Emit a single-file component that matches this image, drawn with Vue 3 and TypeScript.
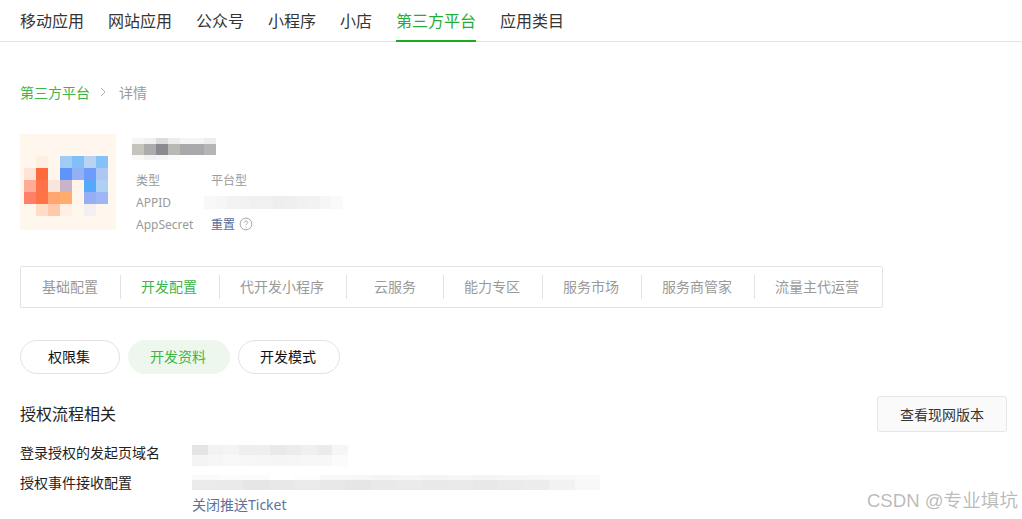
<script setup lang="ts">
const navItems = ['移动应用', '网站应用', '公众号', '小程序', '小店', '第三方平台', '应用类目']
const subTabs = ['基础配置', '开发配置', '代开发小程序', '云服务', '能力专区', '服务市场', '服务商管家', '流量主代运营']
const pills = ['权限集', '开发资料', '开发模式']

const logoCells = [
  ['#fff7ee', '#ffefe3', '#fff7ee', '#9fcbf5', '#80c0f8', '#b9d4f2', '#84c1f9'],
  ['#ffe3d6', '#ff6a3c', '#fff5ea', '#5f95fb', '#93b0f4', '#6e9cfb', '#aec6f4'],
  ['#ffab97', '#ff7249', '#f9e6da', '#c8b3c9', '#fff4ea', '#55a8fb', '#aed0f3'],
  ['#ff7f68', '#ff7346', '#ffa571', '#ffac6e', '#fff5ea', '#95aef6', '#9eb6f5'],
  ['#fff6ec', '#ffdcc7', '#ffc8ab', '#fff0e3', '#fff6ec', '#f3eef0', '#fff6ee'],
].flat()

// pixelated bits that were blurred out in the screenshot
const nameBlur = [
  { h: 6, cells: ['#f5f5f5', '#f0f0f0', '#dcdcdc', '#ececec', '#f4f4f4', '#f4f4f4', '#ededed'] },
  { h: 11, cells: ['#c6c3be', '#acacac', '#8a8a90', '#bab8b4', '#a9a9ab', '#a9a9ab', '#b5b5b5'] },
  { h: 5, cells: ['#f8f8f8', '#f2f2f2', '#f5f5f5', '#fafafa', '#ffffff', '#ffffff', '#ffffff'] },
]
const appidBlur = [
  { h: 13, cells: ['#f8f8f8', '#f6f6f6', '#f3f3f3', '#f2f2f2', '#f0f0f0', '#f0f0f0', '#eeeeee', '#efefef', '#f1f1f1', '#f2f2f2', '#f6f6f6', '#fafafa'] },
]
const domainBlur = [
  { h: 10, cells: ['#e4e4e4', '#f2f2f2', '#f4f4f4', '#eeeeee', '#efefef', '#e9e9e9', '#ececec', '#f0f0f0', '#ebebeb', '#f6f6f6'] },
  { h: 11, cells: ['#f4f4f4', '#f6f6f6', '#f8f8f8', '#f7f7f7', '#f6f6f6', '#f5f5f5', '#f6f6f6', '#f7f7f7', '#f7f7f7', '#fbfbfb'] },
]
const eventBlur = [
  { h: 5, cells: ['#fafafa', '#fcfcfc', '#fbfbfb', '#ffffff', '#fdfdfd', '#f8f8f8', '#f7f7f7', '#f5f5f5', '#f6f6f6', '#f4f4f4', '#f6f6f6', '#f5f5f5', '#f6f6f6', '#f7f7f7', '#f8f8f8', '#fafafa'] },
  { h: 10, cells: ['#ebebeb', '#eaeaea', '#e6e6e6', '#e8e8e8', '#ebebeb', '#e8e8e8', '#e6e6e6', '#e9e9e9', '#ebebeb', '#e9e9e9', '#eaeaea', '#e8e8e8', '#ebebeb', '#ececec', '#f2f2f2', '#f8f8f8'] },
]
</script>

<template>
  <div class="page">
    <nav class="nav">
      <a v-for="item in navItems" :key="item" class="nav__item" :class="{ 'is-active': item === '第三方平台' }">{{ item }}</a>
    </nav>

    <div class="crumb">
      <a class="crumb__link">第三方平台</a>
      <svg class="crumb__sep" viewBox="0 0 8 10" aria-hidden="true"><path d="M2 1l4 4-4 4" /></svg>
      <span>详情</span>
    </div>

    <section class="profile">
      <div class="logo">
        <div class="logo__grid">
          <i v-for="(color, i) in logoCells" :key="i" :style="{ background: color }" />
        </div>
      </div>
      <div class="profile__main">
        <div class="mosaic mosaic--name">
          <div v-for="(row, r) in nameBlur" :key="r" class="mosaic__row" :style="{ height: row.h + 'px' }">
            <i v-for="(c, i) in row.cells" :key="i" :style="{ background: c }" />
          </div>
        </div>
        <dl class="meta">
          <dt>类型</dt>
          <dd>平台型</dd>
          <dt>APPID</dt>
          <dd>
            <div class="mosaic mosaic--appid">
              <div v-for="(row, r) in appidBlur" :key="r" class="mosaic__row" :style="{ height: row.h + 'px' }">
                <i v-for="(c, i) in row.cells" :key="i" :style="{ background: c }" />
              </div>
            </div>
          </dd>
          <dt>AppSecret</dt>
          <dd class="meta__secret">
            <a class="link">重置</a>
            <svg class="help" viewBox="0 0 14 14" aria-hidden="true">
              <circle cx="7" cy="7" r="5.9" />
              <path d="M5.3 5.6c0-1 .8-1.6 1.7-1.6s1.7.6 1.7 1.5c0 1.2-1.7 1.3-1.7 2.6" />
              <path d="M7 9.6v.9" />
            </svg>
          </dd>
        </dl>
      </div>
    </section>

    <div class="tabs">
      <a v-for="tab in subTabs" :key="tab" class="tabs__item" :class="{ 'is-active': tab === '开发配置', 'is-wide': tab === '云服务' }">
        {{ tab }}
      </a>
    </div>

    <div class="pills">
      <a v-for="pill in pills" :key="pill" class="pill" :class="{ 'is-active': pill === '开发资料' }">{{ pill }}</a>
    </div>

    <div class="section-head">
      <h3>授权流程相关</h3>
      <button type="button" class="btn">查看现网版本</button>
    </div>

    <div class="row row--domain">
      <label>登录授权的发起页域名</label>
      <div class="mosaic mosaic--domain">
        <div v-for="(row, r) in domainBlur" :key="r" class="mosaic__row" :style="{ height: row.h + 'px' }">
          <i v-for="(c, i) in row.cells" :key="i" :style="{ background: c }" />
        </div>
      </div>
    </div>
    <div class="row row--event">
      <label>授权事件接收配置</label>
      <div>
        <div class="mosaic mosaic--event">
          <div v-for="(row, r) in eventBlur" :key="r" class="mosaic__row" :style="{ height: row.h + 'px' }">
            <i v-for="(c, i) in row.cells" :key="i" :style="{ background: c }" />
          </div>
        </div>
        <a class="ticket">关闭推送Ticket</a>
      </div>
    </div>

    <div class="watermark">CSDN @专业填坑</div>
  </div>
</template>

<style>
html,
body {
  margin: 0;
  background: #fff;
  overflow: hidden;
}
</style>

<style scoped>
.page {
  position: relative;
  width: 1022px;
  height: 519px;
  overflow: hidden;
  background: #fff;
  color: #353535;
  font-family: "Noto Sans", "Noto Sans CJK SC", sans-serif;
  font-size: 14px;
}

.nav {
  display: flex;
  gap: 24px;
  box-sizing: border-box;
  height: 42px;
  padding-left: 20px;
  border-bottom: 1px solid #e2e2e2;
}

.nav__item {
  box-sizing: border-box;
  height: 42px;
  font-size: 16px;
  line-height: 42px;
  border-bottom: 2px solid transparent;
}

.nav__item.is-active {
  border-bottom-color: #1aad19;
  color: #22ac38;
}

.crumb {
  display: flex;
  align-items: center;
  height: 20px;
  margin: 40px 0 0 20px;
  color: #9a9a9a;
}

.crumb__link {
  color: #3fb549;
}

.crumb__sep {
  width: 8px;
  height: 10px;
  margin: 0 12px 0 9px;
  fill: none;
  stroke: #9fb9a2;
  stroke-width: 1;
}

.profile {
  display: flex;
  gap: 16px;
  margin: 32px 0 0 20px;
}

.logo {
  box-sizing: border-box;
  width: 96px;
  height: 96px;
  padding: 22px 0 0 4px;
  background: #fff7ee;
}

.logo__grid {
  display: grid;
  grid-template-columns: repeat(7, 12px);
  grid-auto-rows: 12px;
}

.mosaic {
  display: block;
}

.mosaic__row {
  display: flex;
}

.mosaic__row i {
  flex: 1;
}

.mosaic--name {
  width: 84px;
  margin-top: 4px;
}

.mosaic--appid {
  width: 139px;
  margin-left: -7px;
}

.mosaic--domain {
  width: 156px;
  margin-top: 2px;
}

.mosaic--event {
  width: 408px;
}

.meta {
  display: grid;
  grid-template-columns: 75px 1fr;
  grid-auto-rows: 22px;
  align-items: center;
  margin: 9px 0 0 4px;
  font-size: 12px;
  color: #9a9a9a;
}

.meta dt,
.meta dd {
  margin: 0;
}

.meta__secret {
  display: flex;
  align-items: center;
  gap: 4px;
}

.link {
  color: #576b95;
}

.help {
  width: 14px;
  height: 14px;
  fill: none;
  stroke: #a8a8a8;
  stroke-width: 1;
}

.tabs {
  display: flex;
  box-sizing: border-box;
  width: 863px;
  height: 42px;
  margin: 31px 0 0 20px;
  align-items: center;
  border: 1px solid #e2e2e2;
  border-radius: 2px;
}

.tabs__item {
  box-sizing: border-box;
  padding: 0 22px 0 20px;
  height: 24px;
  line-height: 24px;
  text-align: center;
  color: #9a9a9a;
  border-right: 1px solid #e2e2e2;
  white-space: nowrap;
}

.tabs__item:first-child {
  padding: 0 22px 0 21px;
}

.tabs__item:last-child {
  flex: 1;
  text-align: left;
  border-right: 0;
}

.tabs__item.is-wide {
  width: 97px;
  padding: 0;
}

.tabs__item.is-active {
  color: #3fb549;
}

.pills {
  display: flex;
  gap: 8px;
  margin: 32px 0 0 20px;
}

.pill {
  box-sizing: border-box;
  width: 102px;
  height: 34px;
  padding-right: 2px;
  line-height: 32px;
  text-align: center;
  color: #111;
  border: 1px solid #e2e2e2;
  border-radius: 17px;
}

.pill:first-child {
  width: 100px;
}

.pill.is-active {
  border-color: #eef7ee;
  background: #eef7ee;
  color: #3fb549;
}

.section-head {
  display: flex;
  align-items: center;
  justify-content: space-between;
  margin: 22px 15px 0 20px;
}

.section-head h3 {
  margin: 0 0 2px;
  font-size: 16px;
  font-weight: 400;
  color: #222;
}

.btn {
  box-sizing: border-box;
  width: 130px;
  height: 36px;
  padding: 0;
  border: 1px solid #e6e6e6;
  border-radius: 3px;
  background: #fafafa;
  color: #353535;
  font: inherit;
}

.row {
  display: grid;
  grid-template-columns: 172px 1fr;
  margin-left: 20px;
}

.row label {
  color: #222;
  line-height: 20px;
}

.row--domain {
  margin-top: 11px;
}

.row--event {
  margin-top: 9px;
}

.row--event label {
  margin-top: -2px;
}

.ticket {
  display: block;
  margin-top: 5px;
  line-height: 20px;
  color: #5f7399;
}

.watermark {
  position: absolute;
  right: 4px;
  top: 489px;
  font-family: "Liberation Sans", "Noto Sans CJK SC", sans-serif;
  font-size: 18.6px;
  line-height: 24px;
  color: rgba(120, 120, 120, 0.5);
  white-space: nowrap;
}
</style>
